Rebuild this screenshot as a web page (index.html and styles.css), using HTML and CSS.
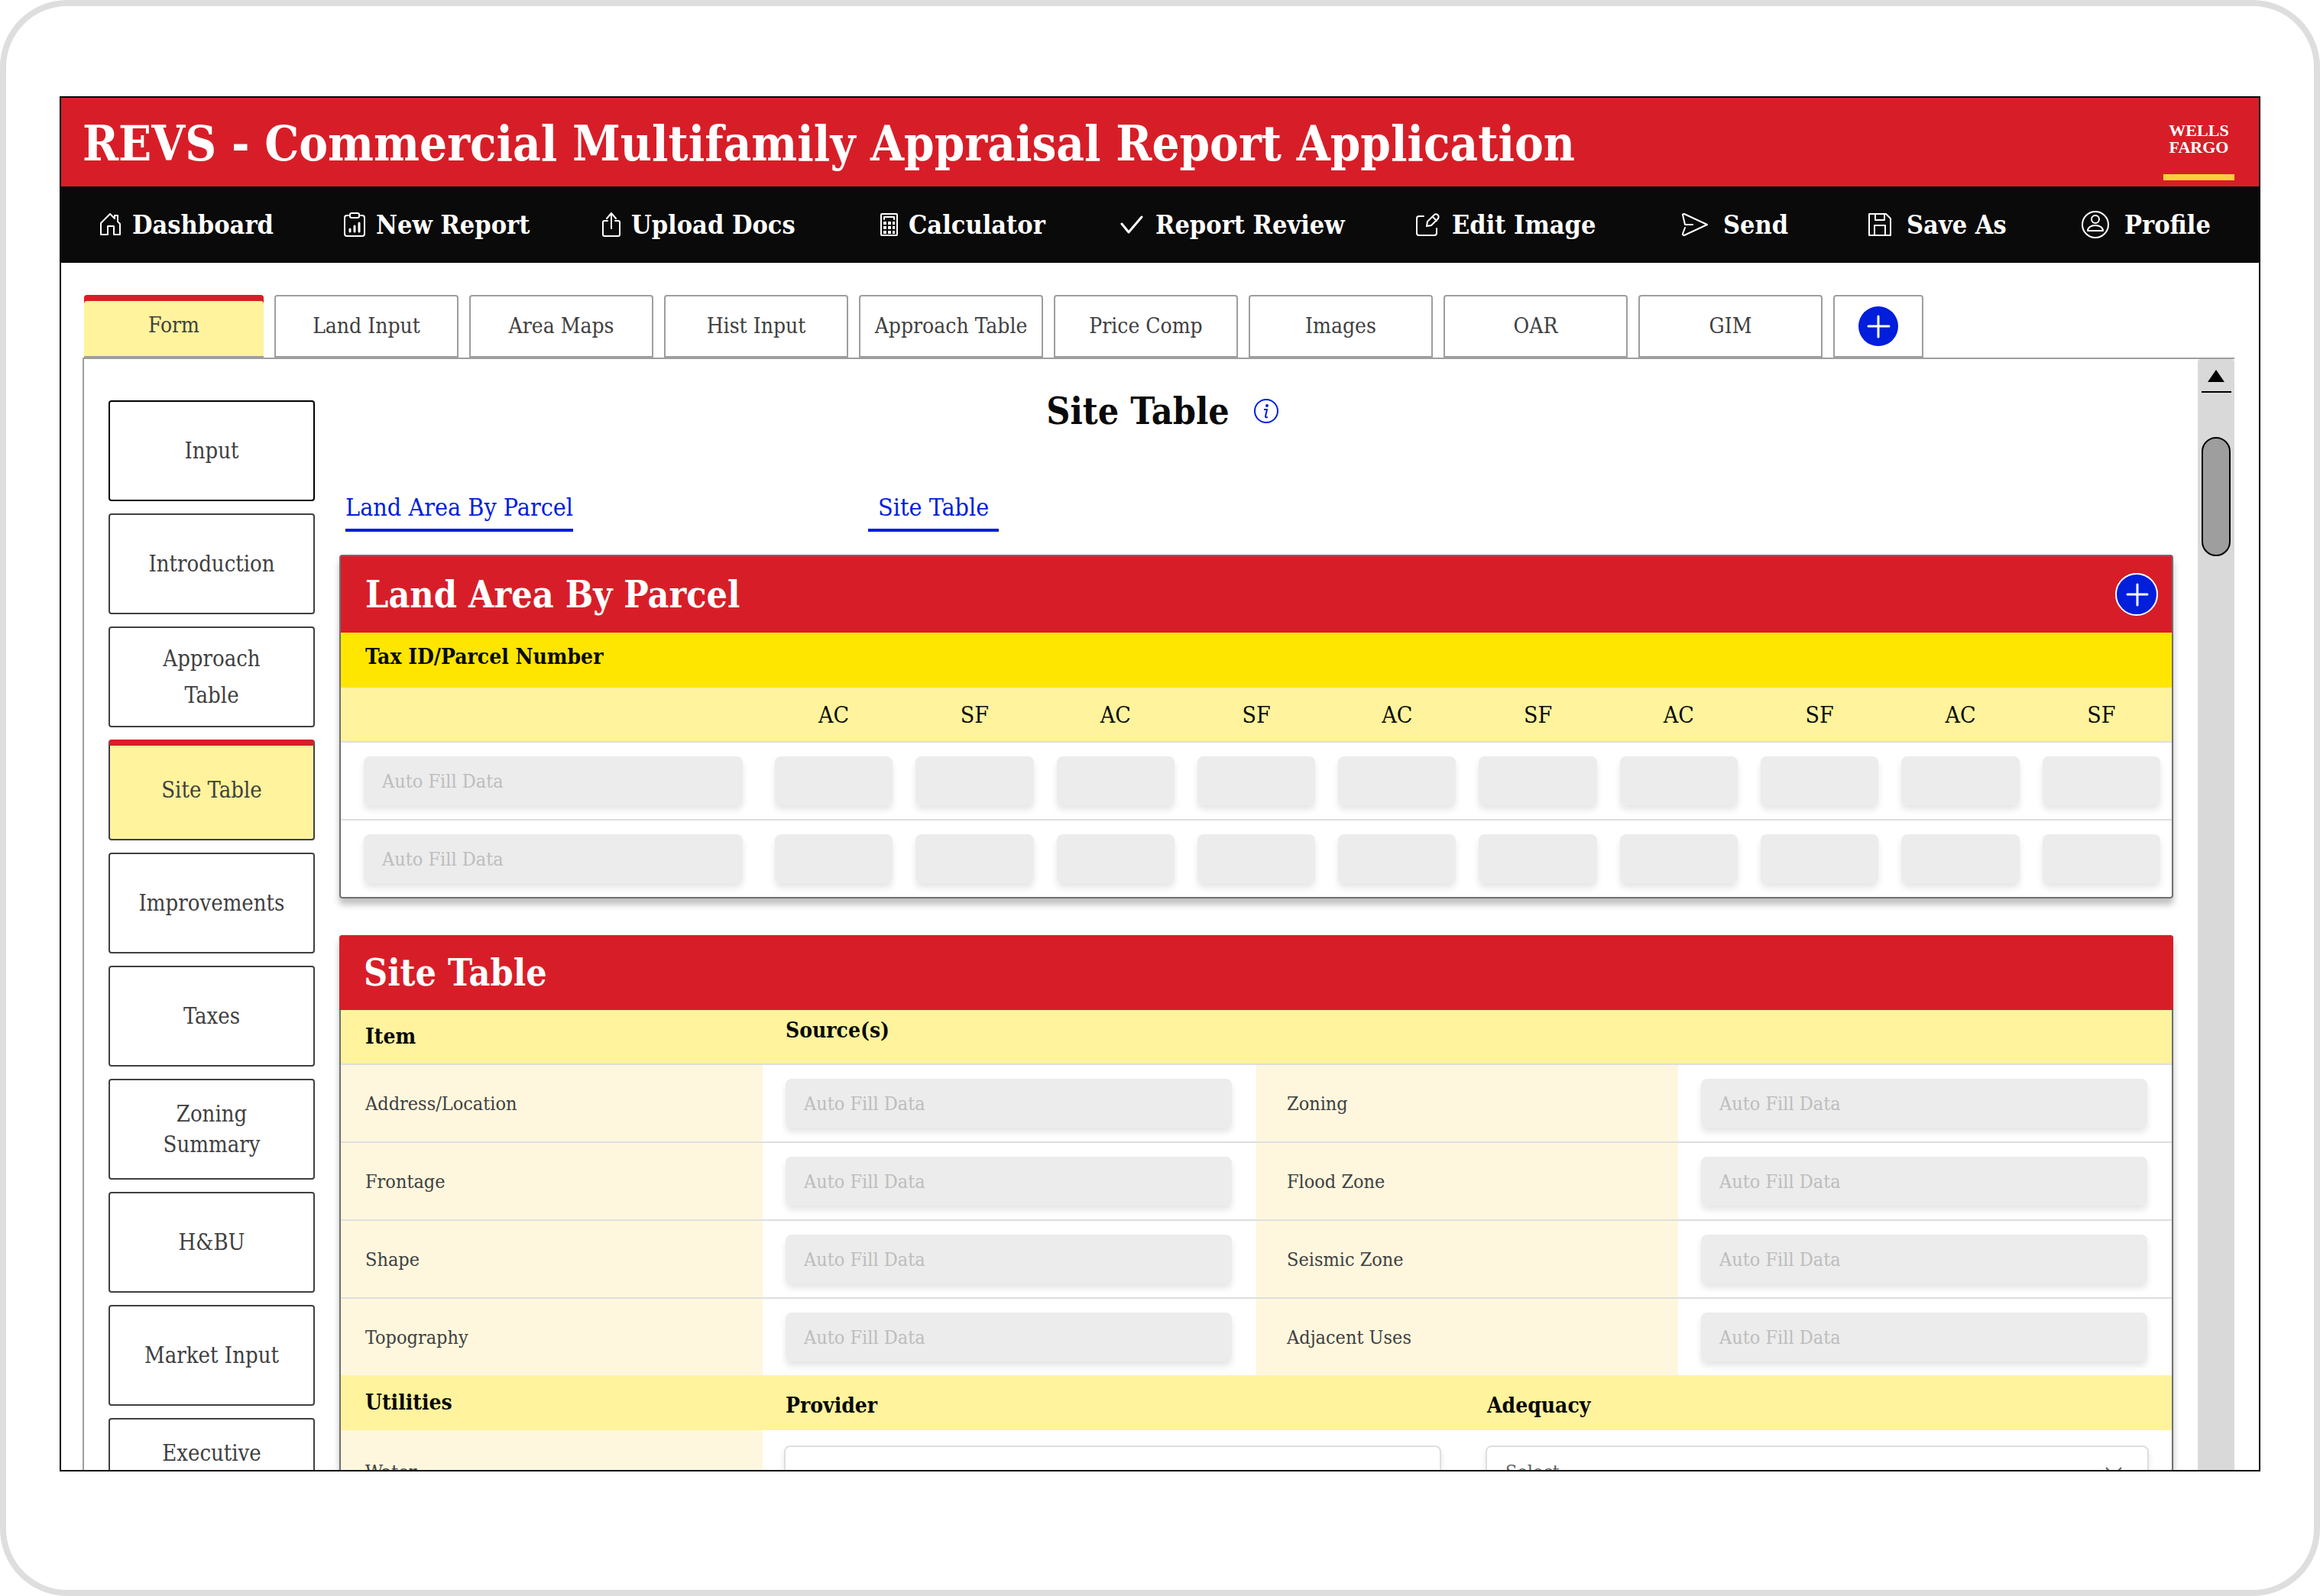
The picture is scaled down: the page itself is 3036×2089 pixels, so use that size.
FILE: index.html
```html
<!DOCTYPE html>
<html lang="en">
<head>
<meta charset="utf-8">
<title>REVS - Commercial Multifamily Appraisal Report Application</title>
<link rel="stylesheet" href="styles.css">
</head>
<body>
<div class="frame">
<div class="screen">
  <header class="banner">
    <h1>REVS - Commercial Multifamily Appraisal Report Application</h1>
    <div class="logo"><span>WELLS</span><span>FARGO</span></div>
  </header>

  <nav class="toolbar">
    <button type="button"><svg width="28" height="30" viewBox="0 0 28 30"><path d="M1 13 13 1l6 6V3h4v8l3 3v14h-8V17h-8v11H1z"/></svg>Dashboard</button>
    <button type="button"><svg width="28" height="32" viewBox="0 0 28 32"><path d="M6 4H4a3 3 0 0 0-3 3v21a3 3 0 0 0 3 3h20a3 3 0 0 0 3-3V7a3 3 0 0 0-3-3h-2"/><rect x="8" y="1" width="12" height="6" rx="2"/><path class="thick" d="M8 22v3M14 18v7M20 14v11"/></svg>New Report</button>
    <button type="button"><svg width="24" height="32" viewBox="0 0 24 32"><path d="M12 21V1M6 8l6-7 6 7M7 11H3a2 2 0 0 0-2 2v16a2 2 0 0 0 2 2h18a2 2 0 0 0 2-2V13a2 2 0 0 0-2-2h-4"/></svg>Upload Docs</button>
    <button type="button"><svg width="23" height="30" viewBox="0 0 23 30"><rect x="1" y="1" width="21" height="28" rx="1"/><path d="M5 8V5h13v3"/><path class="dots" d="M4 13h15M4 19h15M4 25h15"/></svg>Calculator</button>
    <button type="button" class="mid"><svg width="30" height="30" viewBox="0 0 30 30"><path class="thick" d="m2 14 9 11L28 5"/></svg>Report Review</button>
    <button type="button" class="mid"><svg width="31" height="30" viewBox="0 0 31 30"><path d="M10 4H4a3 3 0 0 0-3 3v19a3 3 0 0 0 3 3h20a3 3 0 0 0 3-3v-6M14 17l1-6 9-9c3-2 7 1 5 5l-9 9zM22 5l5 5"/></svg>Edit Image</button>
    <button type="button" class="wide"><svg width="34" height="30" viewBox="0 0 34 30"><path d="M14 15H4L1 2q0-1 2-1l30 14L3 29q-2 0-2-2l3-8"/></svg>Send</button>
    <button type="button" class="wide"><svg width="30" height="30" viewBox="0 0 30 30"><path d="M1 1h22l6 6v22H1zM9 1v8h12V1M8 29V16h14v13"/></svg>Save As</button>
    <button type="button" class="wide"><svg width="36" height="36" viewBox="0 0 36 36"><circle cx="18" cy="18" r="17"/><circle cx="18" cy="11" r="5"/><path d="M8 26c0-4 4-7 10-7s10 3 10 7z"/></svg>Profile</button>
  </nav>

  <nav class="tabs">
    <button type="button" class="tab active">Form</button>
    <button type="button" class="tab">Land Input</button>
    <button type="button" class="tab">Area Maps</button>
    <button type="button" class="tab">Hist Input</button>
    <button type="button" class="tab">Approach Table</button>
    <button type="button" class="tab">Price Comp</button>
    <button type="button" class="tab">Images</button>
    <button type="button" class="tab">OAR</button>
    <button type="button" class="tab">GIM</button>
    <button type="button" class="tab add" aria-label="Add tab"><svg width="52" height="52" viewBox="0 0 52 52"><circle cx="26" cy="26" r="26"/><path d="M13 26h27M26 13v27"/></svg></button>
  </nav>

  <div class="workspace">
    <nav class="sidebar">
      <button type="button" class="first">Input</button>
      <button type="button">Introduction</button>
      <button type="button" class="loose">Approach Table</button>
      <button type="button" class="active">Site Table</button>
      <button type="button">Improvements</button>
      <button type="button">Taxes</button>
      <button type="button">Zoning Summary</button>
      <button type="button">H&amp;BU</button>
      <button type="button">Market Input</button>
      <button type="button">Executive Summary</button>
    </nav>

    <main class="content">
      <div class="heading">
        <h2>Site Table</h2>
        <svg width="32" height="32" viewBox="0 0 32 32"><circle cx="16" cy="16" r="15"/><path d="M13 14h4l-2 9q0 2 3 1"/><circle class="dot" cx="17" cy="9" r="2"/></svg>
      </div>
      <div class="links">
        <a href="#land-area">Land Area By Parcel</a>
        <a href="#site-table" class="padded">Site Table</a>
      </div>

      <section class="card" id="land-area">
        <div class="card-head">
          <h3>Land Area By Parcel</h3>
          <button type="button" aria-label="Add parcel"><svg width="56" height="56" viewBox="0 0 56 56"><circle cx="28" cy="28" r="27"/><path d="M16 28h26M29 15v27"/></svg></button>
        </div>
        <div class="subhead">Tax ID/Parcel Number</div>
        <table class="parcels">
          <thead>
            <tr><th class="parcel-col"></th><th>AC</th><th>SF</th><th>AC</th><th>SF</th><th>AC</th><th>SF</th><th>AC</th><th>SF</th><th>AC</th><th>SF</th></tr>
          </thead>
          <tbody>
            <tr>
              <td class="parcel-col"><input type="text" placeholder="Auto Fill Data" aria-label="Parcel 1"></td>
              <td><input type="text" aria-label="Parcel 1 AC 1"></td><td><input type="text" aria-label="Parcel 1 SF 1"></td>
              <td><input type="text" aria-label="Parcel 1 AC 2"></td><td><input type="text" aria-label="Parcel 1 SF 2"></td>
              <td><input type="text" aria-label="Parcel 1 AC 3"></td><td><input type="text" aria-label="Parcel 1 SF 3"></td>
              <td><input type="text" aria-label="Parcel 1 AC 4"></td><td><input type="text" aria-label="Parcel 1 SF 4"></td>
              <td><input type="text" aria-label="Parcel 1 AC 5"></td><td><input type="text" aria-label="Parcel 1 SF 5"></td>
            </tr>
            <tr>
              <td class="parcel-col"><input type="text" placeholder="Auto Fill Data" aria-label="Parcel 2"></td>
              <td><input type="text" aria-label="Parcel 2 AC 1"></td><td><input type="text" aria-label="Parcel 2 SF 1"></td>
              <td><input type="text" aria-label="Parcel 2 AC 2"></td><td><input type="text" aria-label="Parcel 2 SF 2"></td>
              <td><input type="text" aria-label="Parcel 2 AC 3"></td><td><input type="text" aria-label="Parcel 2 SF 3"></td>
              <td><input type="text" aria-label="Parcel 2 AC 4"></td><td><input type="text" aria-label="Parcel 2 SF 4"></td>
              <td><input type="text" aria-label="Parcel 2 AC 5"></td><td><input type="text" aria-label="Parcel 2 SF 5"></td>
            </tr>
          </tbody>
        </table>
      </section>

      <section class="card site" id="site-table">
        <div class="card-head"><h3>Site Table</h3></div>
        <table class="items">
          <thead>
            <tr><th class="label-col">Item</th><th class="raised">Source(s)</th><th class="label-col"></th><th></th></tr>
          </thead>
          <tbody>
            <tr>
              <th class="label-col"><label for="address">Address/Location</label></th><td><input type="text" id="address" placeholder="Auto Fill Data"></td>
              <th class="label-col second"><label for="zoning">Zoning</label></th><td><input type="text" id="zoning" placeholder="Auto Fill Data"></td>
            </tr>
            <tr>
              <th class="label-col"><label for="frontage">Frontage</label></th><td><input type="text" id="frontage" placeholder="Auto Fill Data"></td>
              <th class="label-col second"><label for="flood">Flood Zone</label></th><td><input type="text" id="flood" placeholder="Auto Fill Data"></td>
            </tr>
            <tr>
              <th class="label-col"><label for="shape">Shape</label></th><td><input type="text" id="shape" placeholder="Auto Fill Data"></td>
              <th class="label-col second"><label for="seismic">Seismic Zone</label></th><td><input type="text" id="seismic" placeholder="Auto Fill Data"></td>
            </tr>
            <tr>
              <th class="label-col"><label for="topography">Topography</label></th><td><input type="text" id="topography" placeholder="Auto Fill Data"></td>
              <th class="label-col second"><label for="adjacent">Adjacent Uses</label></th><td><input type="text" id="adjacent" placeholder="Auto Fill Data"></td>
            </tr>
          </tbody>
        </table>
        <table class="items utilities">
          <thead>
            <tr><th class="label-col">Utilities</th><th class="provider-col lowered">Provider</th><th class="lowered">Adequacy</th></tr>
          </thead>
          <tbody>
            <tr>
              <th class="label-col"><label for="water">Water</label></th>
              <td><input type="text" id="water"></td>
              <td>
                <div class="select">
                  <select aria-label="Water adequacy"><option>Select</option></select>
                  <svg width="24" height="14" viewBox="0 0 24 14"><path d="m2 2 10 10L22 2"/></svg>
                </div>
              </td>
            </tr>
          </tbody>
        </table>
      </section>
    </main>

    <div class="scrollbar" aria-hidden="true">
      <svg width="22" height="16" viewBox="0 0 22 16"><path d="M11 0l11 16H0z"/></svg>
      <div class="stop"></div>
      <div class="thumb"></div>
    </div>
  </div>
</div>
</div>
</body>
</html>
```
FILE: styles.css
```css
* { box-sizing: border-box; }

body {
  margin: 0;
  background: #fff;
  color: #0a0a0a;
  font-family: "DejaVu Serif Condensed", "DejaVu Serif", "Liberation Serif", serif;
  font-size: 28px;
}

h1, h2, h3 { margin: 0; font-weight: bold; }

button, input, select { font-family: inherit; }
button { margin: 0; padding: 0; border: 0; background: none; cursor: pointer; }
svg { display: block; flex: none; }

/* Device frame */
.frame {
  display: flex;
  height: 100vh;
  padding: 118px 70px 155px;
  border: 8px solid #dedede;
  border-radius: 88px;
}
.screen {
  display: flex;
  flex-direction: column;
  flex: 1;
  min-width: 0;
  overflow: hidden;
  border: 2px solid #000;
}

/* Banner */
.banner {
  display: flex;
  flex: none;
  align-items: center;
  justify-content: space-between;
  height: 116px;
  padding: 8px 32px 8px 28px;
  background: #d71e28;
  color: #fff;
}
.banner h1 { font-size: 63px; line-height: 72px; padding-top: 4px; }
.logo {
  display: flex;
  flex-direction: column;
  align-items: center;
  width: 93px;
  height: 100px;
  padding-top: 24px;
  border-bottom: 8px solid #ffcd41;
  font-family: "Liberation Serif", serif;
  font-size: 22px;
  font-weight: bold;
  line-height: 22px;
}

/* Toolbar */
.toolbar {
  display: grid;
  flex: none;
  grid-template-columns: 319fr 338fr 364fr 314fr 387fr 348fr 244fr 279fr 177fr;
  height: 100px;
  padding: 0 55px 0 51px;
  background: #0a0a0a;
}
.toolbar button {
  display: flex;
  align-items: center;
  gap: 14px;
  min-width: 0;
  color: #fff;
  font-size: 34px;
  font-weight: bold;
  line-height: 40px;
  white-space: nowrap;
}
.toolbar .mid { gap: 16px; }
.toolbar .wide { gap: 20px; }
.toolbar svg { fill: none; stroke: #fff; stroke-width: 2; stroke-linecap: round; stroke-linejoin: round; }
.toolbar .thick { stroke-width: 3; }
.toolbar .dots { stroke-width: 4; stroke-dasharray: 4 2; stroke-linecap: butt; }

/* Tabs */
.tabs { display: flex; flex: none; gap: 14px; padding: 42px 32px 0 30px; }
.tab {
  width: 241px;
  height: 82px;
  border: 2px solid #9e9e9e;
  border-radius: 4px 4px 0 0;
  color: #404040;
  font-size: 28px;
  line-height: 36px;
}
.tab.active {
  width: 235px;
  border-width: 0 0 2px;
  background: #fff39d;
  box-shadow: inset 0 8px #d71e28;
}
.tab.add { display: flex; align-items: center; justify-content: center; width: 118px; }
.tab circle, .card-head circle { fill: #001edc; }
.tab path, .card-head path { stroke: #fff; stroke-width: 3; stroke-linecap: round; }
.card-head circle { stroke: #fff; stroke-width: 2; }

/* Workspace */
.workspace {
  display: flex;
  flex: 1;
  gap: 32px;
  min-height: 0;
  margin: 0 32px 0 28px;
  padding-left: 32px;
  overflow: hidden;
  border-top: 2px solid #9e9e9e;
  border-left: 2px solid #9e9e9e;
}

.sidebar { display: flex; flex: none; flex-direction: column; gap: 16px; width: 270px; padding-top: 54px; }
.sidebar button {
  flex: none;
  height: 132px;
  padding: 0 28px;
  border: 2px solid #404040;
  border-radius: 4px;
  color: #404040;
  font-size: 29px;
  line-height: 40px;
}
.sidebar .first { border-color: #000; }
.sidebar .loose { padding: 0 48px; line-height: 48px; }
.sidebar .active { background: #fff39d; border-top: 8px solid #d71e28; padding-bottom: 6px; }

.content { flex: 1; min-width: 0; padding-top: 40px; }
.heading { display: flex; align-items: center; justify-content: center; gap: 32px; padding-right: 246px; }
.heading h2 { font-size: 48px; line-height: 56px; }
.heading svg { fill: none; stroke: #001edc; stroke-width: 2; }
.heading .dot { fill: #001edc; stroke: none; }

.links { display: flex; gap: 386px; margin: 78px 0 30px 8px; }
.links a {
  padding-bottom: 8px;
  border-bottom: 4px solid #001edc;
  color: #001edc;
  font-size: 32px;
  line-height: 40px;
  text-decoration: none;
}
.links .padded { padding-left: 13px; padding-right: 13px; }

/* Cards */
.card {
  margin-bottom: 48px;
  border: 2px solid #707070;
  border-radius: 4px;
  box-shadow: 0 8px 8px rgba(0, 0, 0, .25);
}
.card-head {
  display: flex;
  align-items: center;
  justify-content: space-between;
  height: 100px;
  padding: 0 18px 0 32px;
  background: #d71e28;
  color: #fff;
}
.card-head h3 { font-size: 48px; line-height: 56px; }
.card.site .card-head { height: 98px; margin: -2px -2px 0; border-radius: 4px 4px 0 0; }
.subhead {
  height: 72px;
  padding: 14px 32px;
  background: #ffe600;
  font-size: 28px;
  font-weight: bold;
  line-height: 36px;
}

table { width: 100%; table-layout: fixed; border-collapse: separate; border-spacing: 0; }
th, td { height: 102px; padding: 0; border-bottom: 2px solid #dedede; text-align: left; }
tbody tr:last-child > * { height: 100px; border-bottom: 0; }
thead th { height: 72px; background: #fff39d; }

input, select {
  display: block;
  width: 100%;
  height: 64px;
  margin: 0;
  padding: 0 24px;
  border: 0;
  border-radius: 8px;
  background: #ececec;
  box-shadow: 0 6px 8px rgba(0, 0, 0, .1);
  color: #404040;
  font-size: 25px;
}
input::placeholder { color: #bdbdbd; opacity: 1; }

.parcels .parcel-col { width: 553px; padding: 0 27px 0 30px; }
.parcels th { font-size: 30px; font-weight: normal; text-align: center; }
.parcels td { padding: 0 15px; }

.items .label-col { width: 552px; padding-left: 32px; }
.items td { padding: 0 32px 0 30px; }
.items thead th { padding-left: 30px; font-size: 28px; line-height: 36px; }
.items thead .label-col { padding-left: 32px; }
.items thead .raised { padding-bottom: 16px; }
.items thead .lowered { padding-top: 8px; }
.items tbody th { background: #fef7de; color: #404040; font-size: 25px; font-weight: normal; }
.items tbody .second { padding-left: 40px; }

.utilities .provider-col { width: 918px; }
.utilities td { padding: 0 30px 0 28px; }
.utilities thead th { border-bottom: 0; }
.utilities tbody tr:last-child > * { height: 108px; }
.utilities input, .utilities select {
  height: 68px;
  border: 2px solid #dedede;
  background: #fff;
  color: #606060;
}
.select { display: grid; align-items: center; }
.select > * { grid-area: 1 / 1; }
.select select { appearance: none; }
.select svg { justify-self: end; margin-right: 34px; fill: none; stroke: #606060; stroke-width: 2; }

/* Scrollbar */
.scrollbar {
  display: flex;
  flex: none;
  flex-direction: column;
  align-items: center;
  width: 48px;
  padding-top: 14px;
  border-radius: 4px 4px 0 0;
  background: #d9d9d9;
}
.stop { width: 39px; height: 2px; margin-top: 12px; background: #000; }
.thumb { width: 38px; height: 156px; margin-top: 58px; border: 2px solid #000; border-radius: 19px; background: #9e9e9e; }
```
